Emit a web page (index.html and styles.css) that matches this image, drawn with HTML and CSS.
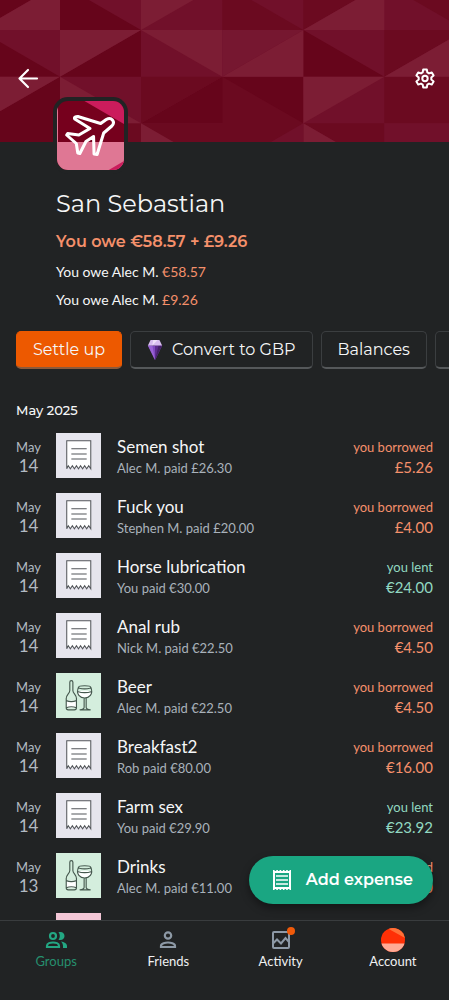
FILE: index.html
```html
<!DOCTYPE html>
<html lang="en">
<head>
<meta charset="utf-8">
<meta name="viewport" content="width=device-width, initial-scale=1">
<title>San Sebastian</title>
<link rel="stylesheet" href="styles.css">
</head>
<body>
<svg class="sprite" aria-hidden="true">
  <symbol id="receipt" viewBox="0 0 44 44">
    <path d="M10.500 7.500h23.500V35l-2-3-2 3-2-3-2 3-2-3-2 3-2-3-2 3-2-3-2 3-2-3-1.500 3z" fill="#fff" stroke="#53565a" stroke-width="1"/>
    <path d="M15 15.500h15M15 20.500h15M15 25.500h15" stroke="#53565a" stroke-width="1"/>
  </symbol>
  <symbol id="drinks" viewBox="0 0 44 44">
    <path d="M10 27h10v7H10z" fill="#fff"/>
    <path d="M21 18q7-2 14 0-1 6-7 6t-7-6z" fill="#fff"/>
    <g fill="none" stroke="#45584e" stroke-width="1.100" stroke-linejoin="round" stroke-linecap="round">
      <path d="M13.500 9q0-1.500 1.500-1.500t1.500 1.500v8c0 3 3.500 4 3.500 8v9q0 2-2 2h-6q-2 0-2-2v-9c0-4 3.500-5 3.500-8zM10 27q5 2 10 0M10 34q5-2 10 0"/>
      <path d="M22 14c-3 7 2 10.500 6 10.500s9-3.500 6-10.500M22 14q0-1.500 6-1.500t6 1.500-6 1.500-6-1.500M21 18q7 2.500 14 0M27.500 24.500v9q0 2-4 2.500h10q-4-.5-4-2.500v-9"/>
    </g>
  </symbol>
</svg>
<div class="screen">
  <header class="cover">
    <svg class="pattern" viewBox="0 0 1347 426" preserveAspectRatio="none" aria-hidden="true">
      <path fill="#71102a" d="M0 0h1347v426H0z"/>
      <g fill="#66051b">
        <path d="M-63-50H180L-63 90zM180-50L423 90H180zM-63 90L180 230H-63zM180 230L423 90V230zM910 90L1153 230H910zM180 230V370H-63zM-63 370H180V510H-63zM667 230V370H910zM423 370L667 230V370zM667 230L910 370V230z"/>
      </g>
      <g fill="#6b0a20">
        <path d="M667-50L910 90H667zM910-50H1153L910 90zM1153-50H1397V90zM1153 90H1397L1153 230zM423 230H667L423 370zM667 230L910 370H667zM1153 230H1397V370H1153zM180 370H910V510H180zM910 370H1153V510z"/>
      </g>
      <g fill="#7c1d34">
        <path d="M180-50V90H-63zM423-50H667L423 90zM910 90L1153-50V90zM180 90H423L180 230zM423 90H667V230zM667 230L910 90V230zM1153 230L1397 90V230zM-63 230H180L-63 370zM180 230L423 370H180zM910 230H1153L910 370zM423 370L667 510H423zM910 370L1153 510H910z"/>
      </g>
      <path fill="#761730" d="M667 90H910L667 230z"/>
      <path fill="#71102a" d="M667 510L910 370V510zM1153 370H1397V510H1153z"/>
    </svg>
    <div class="toolbar">
      <button class="icon-button" aria-label="Back">
        <svg width="24" height="24" viewBox="0 0 24 24" fill="none" stroke="#fff" stroke-width="2.200" stroke-linecap="round" stroke-linejoin="round"><path d="M21 12.500H3.500M12 4l-8.500 8.500L12 21"/></svg>
      </button>
      <button class="icon-button" aria-label="Group settings">
        <svg width="24" height="24" viewBox="0 0 24 24" fill="none" stroke="#fff" stroke-width="2" stroke-linejoin="round"><path d="M10.200 3.500h3.600l.5 2.900 1.700 1 2.800-1 1.800 3.100-2.300 1.900v2.200l2.300 1.900-1.800 3.100-2.800-1-1.700 1-.5 2.900h-3.600l-.5-2.900-1.700-1-2.800 1-1.800-3.100 2.300-1.900v-2.200L3.400 9.500l1.800-3.100 2.800 1 1.700-1z"/><circle cx="12" cy="12.500" r="2.700"/></svg>
      </button>
    </div>
  </header>

  <main class="content">
    <section class="summary">
      <div class="avatar">
        <svg class="avatar-art" viewBox="0 0 66 69" preserveAspectRatio="none" role="img" aria-label="Trip">
          <path fill="#76001d" d="M0 0h66v69H0z"/>
          <path fill="#cb1c5c" d="M27 0h39v23z"/>
          <path fill="#df7794" d="M0 41h66v28H0zM0 6h1v35H0z"/>
          <path fill="#cb1c5c" d="M66 60v9H51z"/>
          <path fill="none" stroke="#fff" stroke-width="3" stroke-linejoin="round" d="M43 22.500l5.500-4c5-3 9.500 2 5.500 6.500l-8 7-6.500 21.500-3-.5-.5-17.500-7.500 5-6 12-2-.5-1.500-9.500-9.500-8.500 1-1.500 11 1.500 11-6.500-15-9.500c-1-2 1-2.500 3-2.500z"/>
        </svg>
      </div>
      <h1 class="title">San Sebastian</h1>
      <p class="total">You owe €58.57 + £9.26</p>
      <p class="debt">You owe Alec M. <span class="owed">€58.57</span></p>
      <p class="debt">You owe Alec M. <span class="owed">£9.26</span></p>
    </section>

    <div class="actions">
      <button class="action primary">Settle up</button>
      <button class="action">
        <svg width="16" height="20" viewBox="0 0 18 20" preserveAspectRatio="none" aria-hidden="true"><path fill="#8048c0" d="M1 5.500h16L9 20z"/><path fill="#5d2b8e" d="M9 5.500h8L9 20z"/><path fill="#9a63d6" d="M1 5.500h5L9 20z"/><path fill="#442066" d="M13 5.500h4L9 20z"/><path fill="#d8bdf0" d="M4 0h10l3 5.500H1z"/><path fill="#efe0fa" d="M7 0h5l-6 5.500z"/></svg>
        Convert to GBP
      </button>
      <button class="action">Balances</button>
      <button class="action" aria-label="More"></button>
    </div>

    <h2 class="month">May 2025</h2>
    <ul class="expenses">
      <li class="expense"><div class="date">May<b>14</b></div><svg class="thumb"><use href="#receipt"/></svg><div class="info"><h3>Semen shot</h3><p>Alec M. paid £26.30</p></div><div class="share owed">you borrowed<b>£5.26</b></div></li>
      <li class="expense"><div class="date">May<b>14</b></div><svg class="thumb"><use href="#receipt"/></svg><div class="info"><h3>Fuck you</h3><p>Stephen M. paid £20.00</p></div><div class="share owed">you borrowed<b>£4.00</b></div></li>
      <li class="expense"><div class="date">May<b>14</b></div><svg class="thumb"><use href="#receipt"/></svg><div class="info"><h3>Horse lubrication</h3><p>You paid €30.00</p></div><div class="share lent">you lent<b>€24.00</b></div></li>
      <li class="expense"><div class="date">May<b>14</b></div><svg class="thumb"><use href="#receipt"/></svg><div class="info"><h3>Anal rub</h3><p>Nick M. paid €22.50</p></div><div class="share owed">you borrowed<b>€4.50</b></div></li>
      <li class="expense"><div class="date">May<b>14</b></div><svg class="thumb drink"><use href="#drinks"/></svg><div class="info"><h3>Beer</h3><p>Alec M. paid €22.50</p></div><div class="share owed">you borrowed<b>€4.50</b></div></li>
      <li class="expense"><div class="date">May<b>14</b></div><svg class="thumb"><use href="#receipt"/></svg><div class="info"><h3>Breakfast2</h3><p>Rob paid €80.00</p></div><div class="share owed">you borrowed<b>€16.00</b></div></li>
      <li class="expense"><div class="date">May<b>14</b></div><svg class="thumb"><use href="#receipt"/></svg><div class="info"><h3>Farm sex</h3><p>You paid €29.90</p></div><div class="share lent">you lent<b>€23.92</b></div></li>
      <li class="expense"><div class="date">May<b>13</b></div><svg class="thumb drink"><use href="#drinks"/></svg><div class="info"><h3>Drinks</h3><p>Alec M. paid €11.00</p></div><div class="share owed">you borrowed<b>€2.20</b></div></li>
      <li class="expense"><div class="date"></div><svg class="thumb pink"></svg></li>
    </ul>
  </main>

  <button class="fab">
    <svg width="20" height="20" viewBox="0 0 20 20" fill="none" stroke="#fff" aria-hidden="true"><path stroke-width="2" d="M2 2h16v16H2z"/><path stroke-width="1.500" d="M4 6h12M4 10h12M4 14h12"/><path stroke-width="1.500" stroke-dasharray="1.600 1.700" d="M1 .8h18M1 19.200h18"/></svg>
    Add expense
  </button>

  <nav class="tabs">
    <a class="tab current" href="#groups">
      <svg class="tab-icon" viewBox="0 0 24 24" fill="none" stroke="currentColor" stroke-width="2.200"><circle cx="9" cy="8" r="3"/><path d="M3 19v-1c0-2.500 3.500-3.500 6-3.500s6 1 6 3.500v1z"/><path fill="currentColor" stroke="none" d="M14.500 4.200c4-1 6 1.300 6 3.800s-2 4.800-6 3.800c1.800-2.200 1.800-5.400 0-7.600zM17 13.500c3 .5 6 2 6 4.500v2h-4v-2c0-1.800-.8-3.300-2-4.500z"/></svg>
      Groups
    </a>
    <a class="tab" href="#friends">
      <svg class="tab-icon" viewBox="0 0 24 24" fill="none" stroke="#8d99a6" stroke-width="2.200"><circle cx="12" cy="7.500" r="3.200"/><path d="M5 19v-1c0-2.500 4.500-3.500 7-3.500s7 1 7 3.500v1z"/></svg>
      Friends
    </a>
    <a class="tab" href="#activity">
      <span class="tab-badge"><svg class="tab-icon" viewBox="0 0 24 24" fill="none" stroke="#8d99a6" stroke-width="2"><rect x="4" y="4" width="16" height="16" rx="1"/><path d="M4 15.500l4-4 4 4 4.500-5.500 3.500 4"/></svg><i class="dot"></i></span>
      Activity
    </a>
    <a class="tab" href="#account">
      <svg class="tab-icon" viewBox="0 0 24 24"><clipPath id="round"><circle cx="12" cy="12" r="12"/></clipPath><g clip-path="url(#round)"><path fill="#ff3006" d="M0 0h24v24H0z"/><path fill="#ff7138" d="M6 0h18v10z"/><path fill="#ffaa95" d="M0 15.500h24V24H0z"/></g></svg>
      Account
    </a>
  </nav>
</div>
</body>
</html>
```
FILE: styles.css
```css
* { box-sizing: border-box; }
body, h1, h2, h3, p, ul { margin: 0; padding: 0; font-weight: 400; }
body {
  background: #212324;
  color: #f5f6f7;
  font-family: Lato, "Liberation Sans", sans-serif;
}
button { font: inherit; color: inherit; border: 0; background: none; padding: 0; }
b { display: block; font-weight: 400; }
.sprite { display: none; }
.screen { position: relative; display: flex; flex-direction: column; height: 100vh; overflow: hidden; }

.cover { position: relative; flex: none; height: 142px; }
.pattern { position: absolute; inset: 0; width: 100%; height: 100%; }
.toolbar { position: relative; display: flex; justify-content: space-between; padding: 66px 12px 0 16px; }
.icon-button { display: flex; }

.content { flex: 1; min-height: 0; }
.summary { position: relative; padding: 0 16px 0 56px; }
.avatar {
  width: 75px;
  height: 77px;
  margin: -45px 0 13px -3px;
  padding: 4px;
  border-radius: 15px;
  background: #212324;
}
.avatar-art { display: block; width: 100%; height: 100%; border-radius: 11px; }
.title { font: 400 24px/34px Montserrat, Inter, sans-serif; }
.total { margin-top: 9px; font: 600 16px/24px Montserrat, Inter, sans-serif; }
.total, .owed { color: #f5906b; }
.debt { font-size: 14px; line-height: 20px; margin-top: 8px; }

.actions { display: flex; gap: 8px; margin-top: 21px; padding-left: 16px; overflow: hidden; }
.action {
  display: flex;
  flex: none;
  align-items: center;
  gap: 9px;
  height: 38px;
  padding: 0 16px;
  border: 1px solid #3b3e40;
  border-bottom: 2px solid #55585a;
  border-radius: 5px;
  font: 400 16px/24px Montserrat, Inter, sans-serif;
}
.primary { background: #ed5900; border-color: #ed5900; border-bottom-color: #8b5a3b; }

.month { margin: 31px 16px 0; font: 500 13px/20px Montserrat, Inter, sans-serif; }
.expenses { list-style: none; padding-top: 7px; }
.expense { display: flex; align-items: center; height: 60px; padding: 0 16px; }
.date { width: 25px; margin-right: 15px; font-size: 13px; line-height: 17px; text-align: center; color: #b2bac2; }
.date b { font-size: 17px; line-height: 20px; }
.thumb { flex: none; width: 45px; height: 45px; margin: 0 16px 3px 0; background: #e6e5ed; }
.drink { background: #d4eedd; }
.pink { background: #f3c6d6; }
.info { flex: 1; }
.info h3 { font-size: 17px; line-height: 22px; }
.info p { font-size: 13px; line-height: 20px; color: #a9b2bb; }
.share { font-size: 13px; line-height: 20px; text-align: right; }
.share b { font-size: 15px; }
.lent { color: #91d8c1; }

.fab {
  position: absolute;
  right: 16px;
  bottom: 96px;
  display: flex;
  align-items: center;
  gap: 14px;
  height: 48px;
  padding: 0 20px 0 23px;
  border-radius: 24px;
  background: #1aa682;
  box-shadow: 0 4px 8px #0006;
  color: #fff;
  font: 600 16px/24px Montserrat, Inter, sans-serif;
}

.tabs { position: relative; flex: none; display: flex; height: 80px; border-top: 1px solid #393c3e; background: #212324; }
.tab {
  display: flex;
  flex: 1;
  flex-direction: column;
  align-items: center;
  padding-top: 7px;
  font-size: 13px;
  line-height: 18px;
  color: #f0f1f2;
  text-decoration: none;
}
.current { color: #26906f; }
.current .tab-icon { color: #23a783; }
.tab-icon { display: block; width: 24px; height: 24px; }
.tab-badge { position: relative; }
.dot { position: absolute; top: -1px; right: -2px; width: 8px; height: 8px; border-radius: 50%; background: #f05a0a; }
```
